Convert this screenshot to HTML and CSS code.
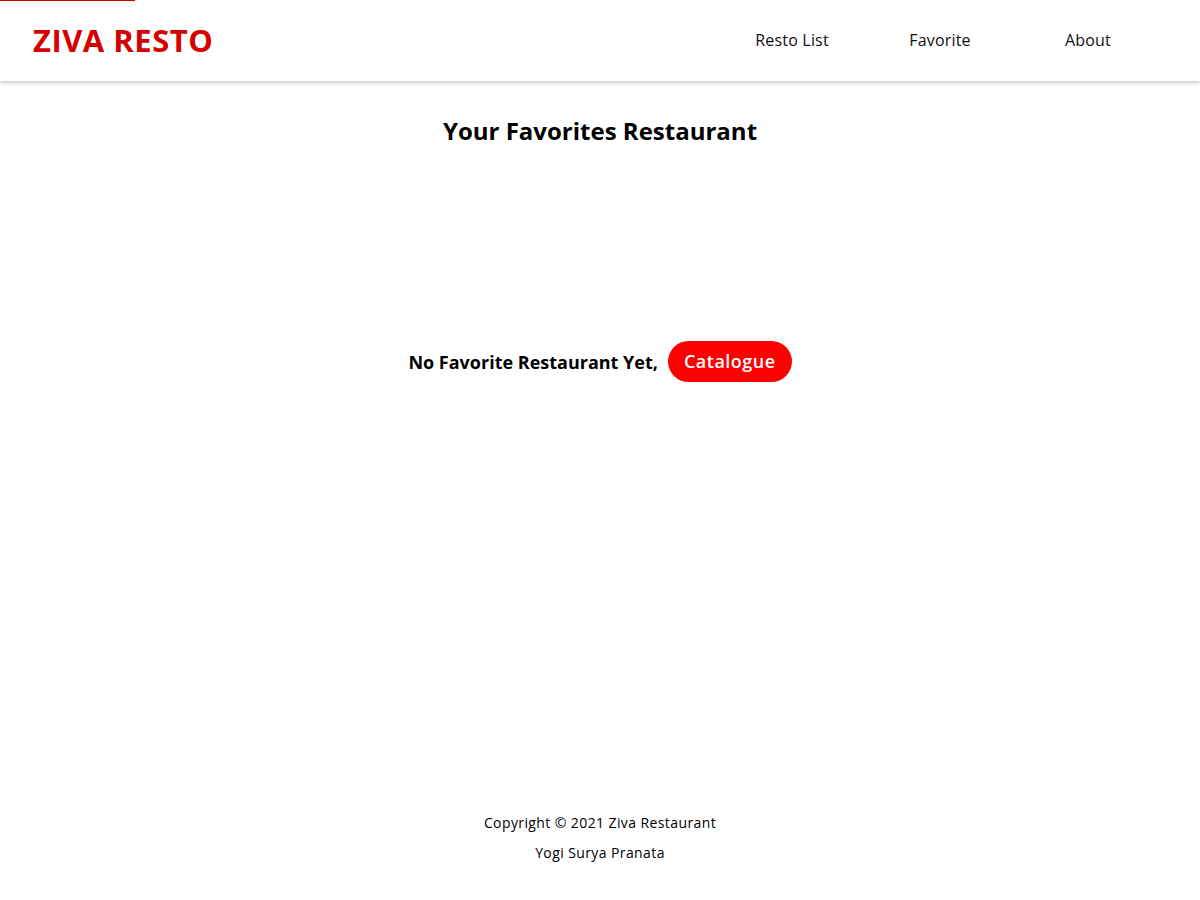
FILE: index.html
```html
<!DOCTYPE html>
<html lang="en">
<head>
<meta charset="utf-8">
<title>Ziva Resto</title>
<link rel="stylesheet" href="styles.css">
</head>
<body>
<a class="skip-link" href="#content"></a>
<header class="app-bar">
  <h1 class="brand">ZIVA RESTO</h1>
  <nav class="nav">
    <a class="nav-link" href="#">Resto List</a>
    <a class="nav-link" href="#">Favorite</a>
    <a class="nav-link" href="#">About</a>
  </nav>
</header>
<main class="content" id="content">
  <h2 class="page-title">Your Favorites Restaurant</h2>
  <div class="empty">
    <span class="empty-text">No Favorite Restaurant Yet,</span>
    <a class="btn" href="#">Catalogue</a>
  </div>
</main>
<footer class="footer">
  <p class="footer-line">Copyright © 2021 Ziva Restaurant</p>
  <p class="footer-line">Yogi Surya Pranata</p>
</footer>
</body>
</html>
```
FILE: styles.css
```css
* { box-sizing: border-box; }
html, body { margin: 0; padding: 0; }
body {
  font-family: "Open Sans", "Liberation Sans", sans-serif;
  color: #000;
  background: #fff;
  min-height: 100vh;
  display: flex;
  flex-direction: column;
}
.skip-link {
  position: absolute;
  top: 0;
  left: 0;
  width: 135px;
  height: 1px;
  background: #d40000;
  z-index: 10;
}
.app-bar {
  height: 81px;
  display: flex;
  align-items: center;
  justify-content: space-between;
  padding: 0 38px 2px 33px;
  background: #fff;
  box-shadow: 0 2px 4px rgba(0,0,0,0.2);
}
.brand {
  margin: 0;
  font-size: 31px;
  font-weight: 700;
  color: #d50000;
  letter-spacing: 0.5px;
}
.nav { display: flex; }
.nav-link {
  width: 148px;
  text-align: center;
  color: #111;
  text-decoration: none;
  font-size: 16px;
  letter-spacing: 0.2px;
}
.content {
  flex: 1;
  display: flex;
  flex-direction: column;
  align-items: center;
  padding-top: 32px;
}
.page-title {
  margin: 0;
  font-size: 24px;
  font-weight: 700;
  line-height: 36px;
}
.empty {
  margin-top: 192px;
  display: flex;
  align-items: center;
  gap: 10px;
}
.empty-text {
  font-size: 18px;
  font-weight: 700;
}
.btn {
  background: #ff0000;
  color: #fff;
  text-decoration: none;
  font-size: 18px;
  font-weight: 600;
  height: 41px;
  line-height: 41px;
  padding: 0 16px;
  letter-spacing: 0.5px;
  border-radius: 21px;
}
.footer {
  padding-bottom: 32px;
  text-align: center;
}
.footer-line {
  margin: 0;
  font-size: 14px;
  line-height: 30px;
  letter-spacing: 0.4px;
}
```
